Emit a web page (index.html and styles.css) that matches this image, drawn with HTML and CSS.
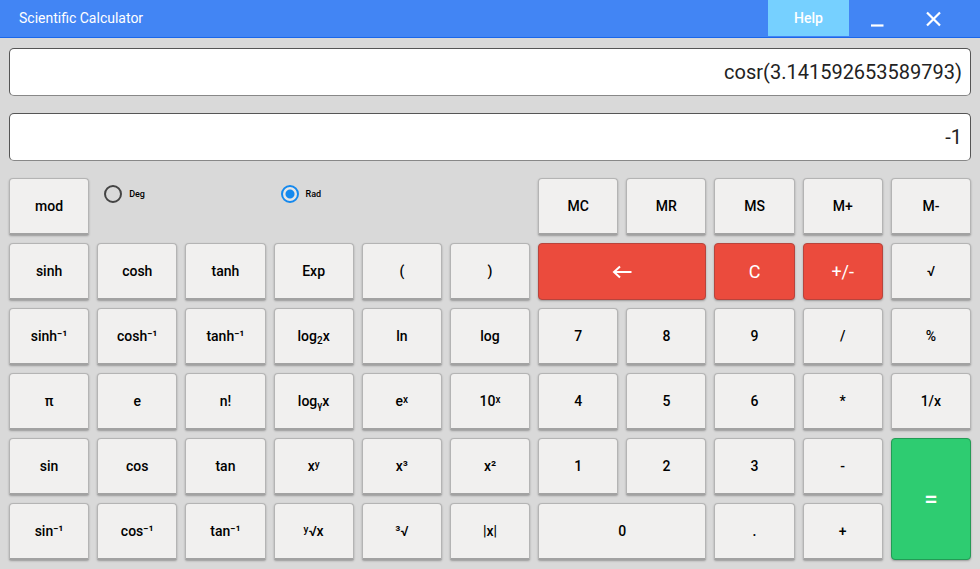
FILE: index.html
```html
<!DOCTYPE html>
<html lang="en">
<head>
<meta charset="utf-8">
<meta name="viewport" content="width=device-width, initial-scale=1">
<title>Scientific Calculator</title>
<link rel="stylesheet" href="styles.css">
</head>
<body>
<header class="titlebar">
  <h1 class="title">Scientific Calculator</h1>
  <button class="help" type="button">Help</button>
  <button class="window-button" type="button" aria-label="Minimize">
    <svg width="16" height="16" viewBox="0 0 16 16"><path d="M2 14.500h12.500" stroke="#fff" stroke-width="2.200"/></svg>
  </button>
  <button class="window-button" type="button" aria-label="Close">
    <svg width="16" height="16" viewBox="0 0 16 16"><path d="M2 1.500l13 13M15 1.500L2 14.500" stroke="#fff" stroke-width="2.200"/></svg>
  </button>
</header>
<main class="calculator">
  <input class="display" type="text" aria-label="Expression" value="cosr(3.141592653589793)">
  <input class="display" type="text" aria-label="Result" value="-1">
  <div class="keys">
    <button class="key" type="button">mod</button>
    <label class="mode"><input type="radio" name="angle">Deg</label>
    <label class="mode mode-last"><input type="radio" name="angle" checked>Rad</label>
    <button class="key" type="button">MC</button>
    <button class="key" type="button">MR</button>
    <button class="key" type="button">MS</button>
    <button class="key" type="button">M+</button>
    <button class="key" type="button">M-</button>

    <button class="key" type="button">sinh</button>
    <button class="key" type="button">cosh</button>
    <button class="key" type="button">tanh</button>
    <button class="key" type="button">Exp</button>
    <button class="key" type="button">(</button>
    <button class="key" type="button">)</button>
    <button class="key wide danger" type="button" aria-label="Backspace">
      <svg width="20" height="14" viewBox="0 0 20 14"><path d="M19.500 7H2M8 1.500L2 7l6 5.500" fill="none" stroke="#fff" stroke-width="2"/></svg>
    </button>
    <button class="key danger" type="button">C</button>
    <button class="key danger" type="button">+/-</button>
    <button class="key" type="button">√</button>

    <button class="key" type="button">sinh⁻¹</button>
    <button class="key" type="button">cosh⁻¹</button>
    <button class="key" type="button">tanh⁻¹</button>
    <button class="key" type="button">log<sub>2</sub>x</button>
    <button class="key" type="button">ln</button>
    <button class="key" type="button">log</button>
    <button class="key" type="button">7</button>
    <button class="key" type="button">8</button>
    <button class="key" type="button">9</button>
    <button class="key" type="button">/</button>
    <button class="key" type="button">%</button>

    <button class="key" type="button">π</button>
    <button class="key" type="button">e</button>
    <button class="key" type="button">n!</button>
    <button class="key" type="button">log<sub>γ</sub>x</button>
    <button class="key" type="button">e<sup>x</sup></button>
    <button class="key" type="button">10<sup>x</sup></button>
    <button class="key" type="button">4</button>
    <button class="key" type="button">5</button>
    <button class="key" type="button">6</button>
    <button class="key" type="button">*</button>
    <button class="key" type="button">1/x</button>

    <button class="key" type="button">sin</button>
    <button class="key" type="button">cos</button>
    <button class="key" type="button">tan</button>
    <button class="key" type="button">x<sup>y</sup></button>
    <button class="key" type="button">x³</button>
    <button class="key" type="button">x²</button>
    <button class="key" type="button">1</button>
    <button class="key" type="button">2</button>
    <button class="key" type="button">3</button>
    <button class="key" type="button">-</button>
    <button class="key tall equals" type="button">=</button>

    <button class="key" type="button">sin⁻¹</button>
    <button class="key" type="button">cos⁻¹</button>
    <button class="key" type="button">tan⁻¹</button>
    <button class="key" type="button"><sup>y</sup>√x</button>
    <button class="key" type="button">³√</button>
    <button class="key" type="button">|x|</button>
    <button class="key wide" type="button">0</button>
    <button class="key" type="button">.</button>
    <button class="key" type="button">+</button>
  </div>
</main>
</body>
</html>
```
FILE: styles.css
```css
* {
  box-sizing: border-box;
}

body {
  margin: 0;
  min-height: 100vh;
  display: flex;
  flex-direction: column;
  background: #d9d9d9;
  color: #000;
  font-family: Roboto, "DejaVu Sans", sans-serif;
  font-size: 14px;
}

button,
input {
  font: inherit;
  color: inherit;
}

.titlebar {
  display: flex;
  height: 38px;
  padding-right: 19px;
  background: #4285f4;
  border-bottom: 1px solid #1a67ea;
  color: #fff;
}

.title {
  flex: 1;
  margin: 0;
  padding-left: 19px;
  font-size: 14px;
  font-weight: 400;
  line-height: 37px;
}

.help {
  width: 81px;
  margin-bottom: 1px;
  padding: 0;
  border: 0;
  background: #76d0ff;
  font-weight: 500;
}

.window-button {
  display: flex;
  align-items: center;
  justify-content: center;
  width: 56px;
  padding: 0;
  border: 0;
  background: none;
}

.calculator {
  flex: 1;
  display: flex;
  flex-direction: column;
  gap: 17px;
  padding: 10px 9px 9px;
}

.display {
  width: 100%;
  height: 48px;
  padding: 0 8px;
  border: 1px solid #555;
  border-bottom-color: #888;
  border-radius: 5px;
  background: #fff;
  color: #222;
  font-size: 20px;
  text-align: right;
}

.keys {
  flex: 1;
  display: grid;
  grid-template-columns: repeat(11, minmax(0, 1fr));
  grid-auto-rows: minmax(56px, 1fr);
  gap: 8px;
}

.key {
  padding: 0;
  border: 1px solid #b4b4b4;
  border-bottom: 2px solid #a2a2a2;
  border-radius: 4px 4px 2px 2px;
  background: #f1f0ef;
  box-shadow: 0 1px 2px #999;
  font-weight: 500;
  text-align: center;
}

.key svg {
  display: block;
  margin: 0 auto;
}

.key sub,
.key sup {
  font-size: 10px;
  line-height: 0;
}

.key sub {
  vertical-align: -3px;
}

.key sup {
  vertical-align: 3px;
}

.wide {
  grid-column: span 2;
}

.tall {
  grid-row: span 2;
}

.danger,
.equals {
  border-width: 1px;
  border-radius: 4px;
  color: #fff;
  font-size: 18px;
  font-weight: 400;
}

.danger {
  border-color: #b8443c;
  background: #eb4b3d;
}

.equals {
  border-color: #239b55;
  background: #2ecc71;
  font-size: 24px;
  font-weight: 500;
}

.mode {
  grid-column: span 2;
  display: flex;
  align-items: center;
  align-self: start;
  gap: 7px;
  padding: 7px;
  font-size: 9px;
  font-weight: 500;
}

.mode-last {
  grid-column: span 3;
}

.mode input {
  appearance: none;
  width: 18px;
  height: 18px;
  margin: 0;
  border: 2px solid #444;
  border-radius: 50%;
}

.mode input:checked {
  border-color: #1589ee;
  background: radial-gradient(circle, #1589ee 4px, #e6e6e6 5px);
}
```
